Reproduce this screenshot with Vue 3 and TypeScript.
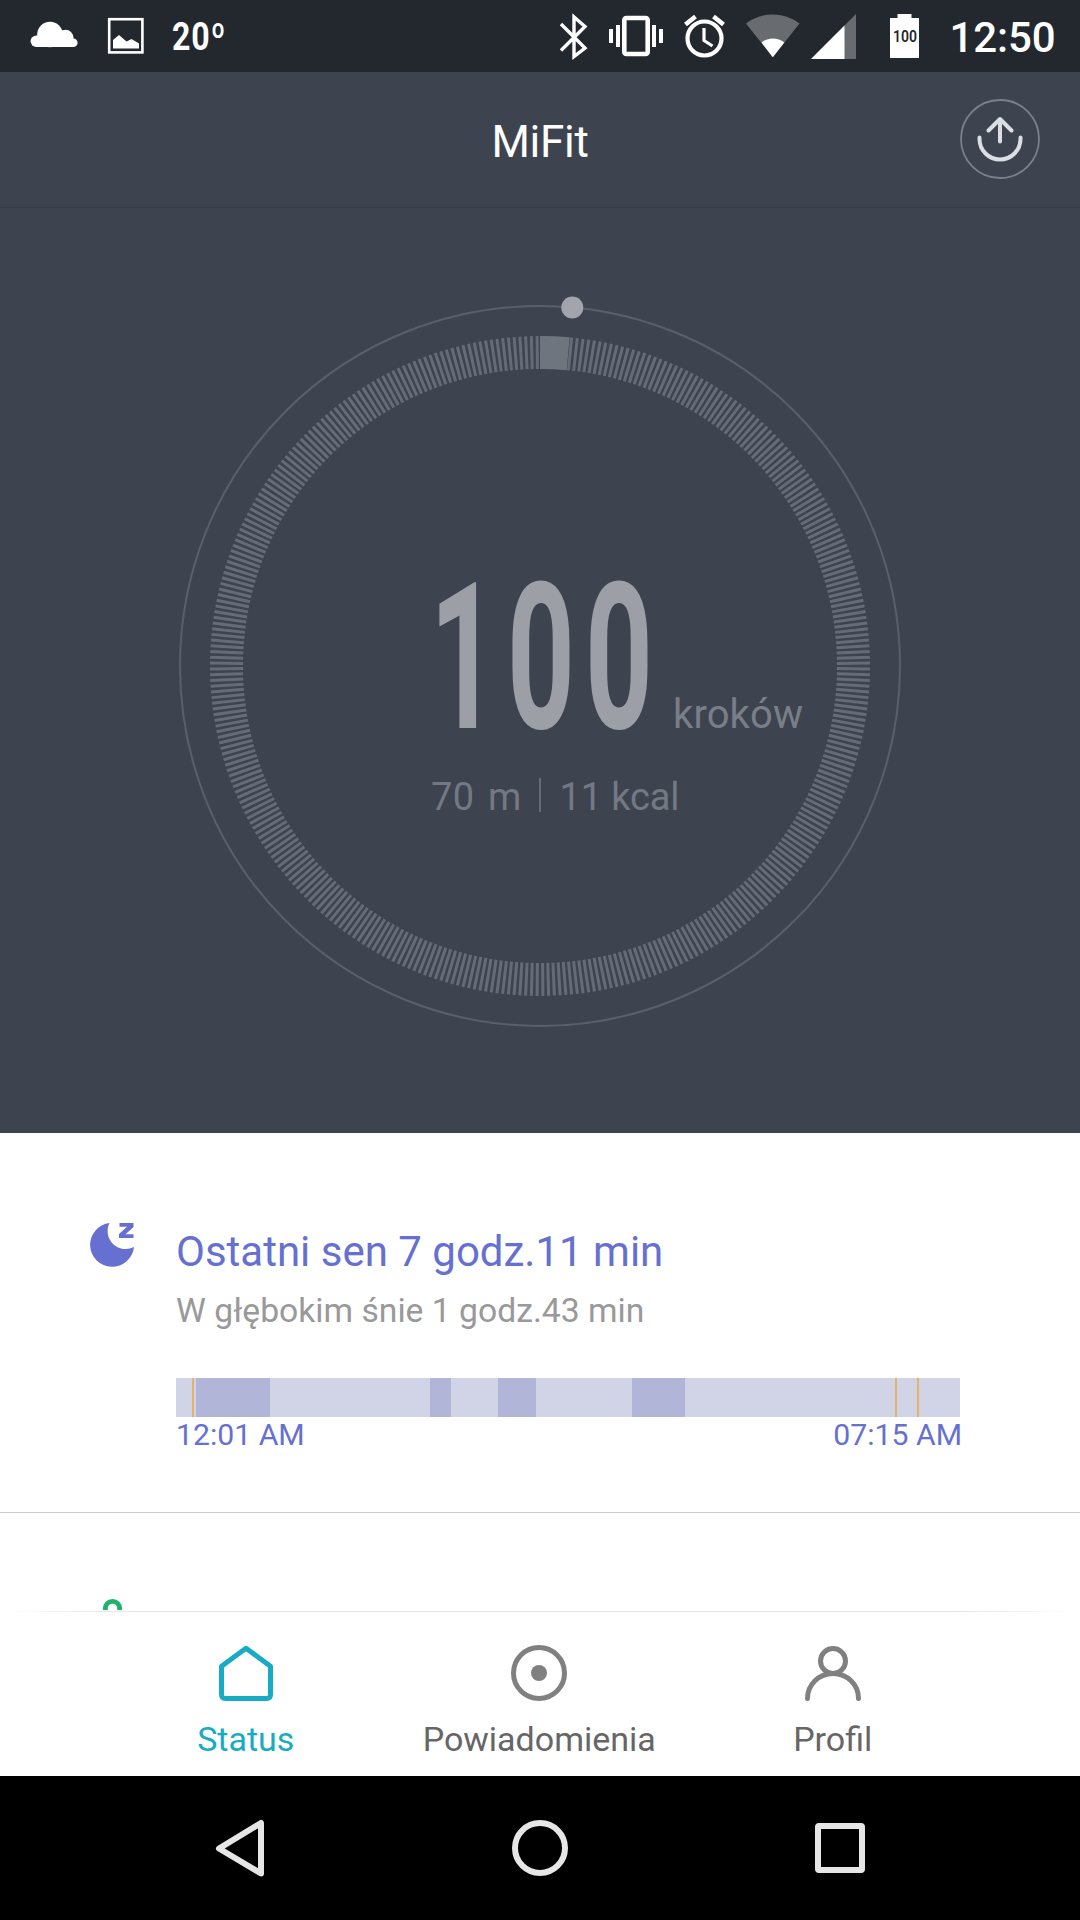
<script setup lang="ts">
interface Segment {
  kind: 'light' | 'deep' | 'awake'
  width: number
}

interface Tab {
  id: 'status' | 'alerts' | 'profile'
  label: string
  active: boolean
}

const steps = '100'
const progressDeg = 5.15

// One mark per degree, leaving out the part covered by the progress block
const marks: number[] = Array.from({ length: 360 }, (_, i) => i + 0.5).filter((a) => a > progressDeg)

const rad = (deg: number): number => (deg * Math.PI) / 180
const onRing = (deg: number, r: number): string =>
  `${(540 + r * Math.sin(rad(deg))).toFixed(2)} ${(458 - r * Math.cos(rad(deg))).toFixed(2)}`

const marksPath = marks.map((a) => `M${onRing(a, 297)}L${onRing(a, 330)}`).join('')
const progressPath =
  `M${onRing(0, 297)}L${onRing(0, 330)}A330 330 0 0 1 ${onRing(progressDeg, 330)}` +
  `L${onRing(progressDeg, 297)}A297 297 0 0 0 ${onRing(0, 297)}Z`
const knob = {
  x: 540 + 360 * Math.sin(rad(progressDeg)),
  y: 458 - 360 * Math.cos(rad(progressDeg)),
}

const segments: Segment[] = [
  { kind: 'light', width: 16 },
  { kind: 'awake', width: 2 },
  { kind: 'light', width: 2 },
  { kind: 'deep', width: 74 },
  { kind: 'light', width: 160 },
  { kind: 'deep', width: 21 },
  { kind: 'light', width: 47 },
  { kind: 'deep', width: 38 },
  { kind: 'light', width: 96 },
  { kind: 'deep', width: 53 },
  { kind: 'light', width: 210 },
  { kind: 'awake', width: 2 },
  { kind: 'light', width: 20 },
  { kind: 'awake', width: 2 },
  { kind: 'light', width: 41 },
]

const tabs: Tab[] = [
  { id: 'status', label: 'Status', active: true },
  { id: 'alerts', label: 'Powiadomienia', active: false },
  { id: 'profile', label: 'Profil', active: false },
]
</script>

<template>
  <div class="screen">
    <div class="statusbar">
      <svg class="notifications" width="240" height="72" viewBox="0 0 240 72">
        <g fill="#fff">
          <circle cx="36.300" cy="41.300" r="5.700" />
          <circle cx="42" cy="38" r="4.800" />
          <circle cx="50" cy="34.500" r="12.800" />
          <circle cx="65.500" cy="37.500" r="7.800" />
          <circle cx="73.300" cy="42.800" r="4.300" />
          <rect x="36.300" y="37" width="37" height="10" />
        </g>
        <rect x="109.200" y="19.200" width="33.200" height="33.200" fill="none" stroke="#fff" stroke-width="2.600" />
        <path d="M113 48.500V40l6-5 7.500 6.500 5-2.500 7.500 4.500v5Z" fill="#fff" />
        <g transform="translate(0 50) scale(.845 1)">
          <text x="203.500 226.300 249.500" class="temp">20º</text>
        </g>
      </svg>
      <svg class="system" width="540" height="72" viewBox="540 0 540 72">
        <path d="M561 24 585 48 574 56.500V17L585 26.500 561 50.500" fill="none" stroke="#fff" stroke-width="3.400" />
        <rect x="624.300" y="18" width="23.400" height="36" rx="2" fill="none" stroke="#fff" stroke-width="4.600" />
        <path d="M611 29v14M618 25v22M654 25v22M661 29v14" fill="none" stroke="#fff" stroke-width="4" />
        <circle cx="704.500" cy="38.500" r="17" fill="none" stroke="#fff" stroke-width="4.200" />
        <path d="M685.500 24.500 695.500 16.500M713.500 16.500 723.500 24.500" stroke="#fff" stroke-width="4.600" />
        <path d="M704 28v12.500L712.500 46" fill="none" stroke="#fff" stroke-width="3.200" />
        <path d="M772.800 57.300 746 23.500A44 44 0 0 1 799.500 23.500Z" fill="#686c71" />
        <path d="M772.800 57.300 761.500 42.500A18.500 18.500 0 0 1 784.300 42.500Z" fill="#fff" />
        <path d="M811 59 856 14V59Z" fill="#686c71" />
        <path d="M811 59 844.500 25.500V59Z" fill="#fff" />
        <path d="M890 18h7.500v-4h14v4h7.500v40H890Z" fill="#fff" />
        <text x="893" y="42" textLength="24" lengthAdjust="spacingAndGlyphs" class="charge">100</text>
        <text x="949.500" y="52" textLength="106" class="clock">12:50</text>
      </svg>
    </div>

    <header class="header">
      <h1 class="title">MiFit</h1>
      <svg class="share" width="82" height="82" viewBox="-41 -41 82 82" fill="none" stroke-linecap="round" stroke-linejoin="round">
        <circle r="39" stroke="#7b808a" stroke-width="1.800" />
        <path d="M0 2.500V-19.500M-11.500-8.500 0-20 11.500-8.500M-20.500-1.500V0a20.500 20.500 0 0 0 41 0v-1.500" stroke="#dbdee2" stroke-width="4" />
      </svg>
    </header>

    <section class="hero">
      <svg width="1080" height="925" viewBox="0 0 1080 925">
        <circle cx="540" cy="458" r="360" fill="none" stroke="#59606c" stroke-width="2" />
        <path :d="marksPath" stroke="#656c77" stroke-width="3" fill="none" />
        <path :d="progressPath" fill="#6e757e" />
        <circle :cx="knob.x" :cy="knob.y" r="11" fill="#a2a5ab" />
        <g transform="translate(0 520) scale(.58 1)">
          <text class="steps" x="741 874 1008.500">{{ steps }}</text>
        </g>
        <text class="unit" x="673" y="520" textLength="130">kroków</text>
        <text class="stat" x="431" y="602" textLength="43">70</text>
        <text class="stat" x="488" y="602">m</text>
        <path d="M540 570v34" stroke="#666c77" stroke-width="2" />
        <text class="stat" x="559.500" y="602" textLength="120">11 kcal</text>
      </svg>
    </section>

    <section class="sleep">
      <svg class="moon" width="48" height="48" viewBox="88 1221 48 48" fill="#6670d0">
        <path d="M109.500 1223A22 22 0 1 0 134 1247 18 18 0 0 1 109.500 1223Z" />
        <path d="M119.500 1223H133.500V1227L125.500 1234.300H133.500V1238H119V1234L127 1226.800H119.500Z" />
      </svg>
      <div class="details">
        <h2 class="total">Ostatni sen 7 godz.11 min</h2>
        <p class="deep-sleep">W głębokim śnie 1 godz.43 min</p>
        <div class="timeline">
          <span v-for="(s, i) in segments" :key="i" :class="['seg', s.kind]" :style="{ width: s.width + 'px' }"></span>
        </div>
        <div class="times">
          <span>12:01 AM</span>
          <span>07:15 AM</span>
        </div>
      </div>
    </section>

    <section class="next">
      <svg width="24" height="12" viewBox="0 0 24 12">
        <circle cx="12.500" cy="10.500" r="7.200" fill="none" stroke="#1fb26c" stroke-width="4.800" />
      </svg>
    </section>

    <nav class="tabs">
      <div v-for="t in tabs" :key="t.id" :class="['tab', { active: t.active }]">
        <svg width="60" height="60" viewBox="-30 -30 60 60" fill="none" stroke="currentColor" stroke-width="5" stroke-linecap="round" stroke-linejoin="round">
          <path v-if="t.id === 'status'" d="M0-24.800 24.500-6.800V21.500Q24.500 25.500 20.500 25.500H-20.500Q-24.500 25.500-24.500 21.500V-6.800Z" />
          <template v-else-if="t.id === 'alerts'">
            <circle r="25.500" />
            <circle r="8" fill="currentColor" stroke="none" />
          </template>
          <template v-else>
            <circle cy="-12" r="12.500" />
            <path d="M-25.500 25.500a25.500 25 0 0 1 51 0" />
          </template>
        </svg>
        <span class="label">{{ t.label }}</span>
      </div>
    </nav>

    <div class="softkeys">
      <svg width="1080" height="144" viewBox="0 0 1080 144" fill="none" stroke="#e6e6e6" stroke-width="6" stroke-linejoin="round">
        <path d="M219 72.500 261 47V97.500Z" />
        <circle cx="540" cy="72" r="25" />
        <rect x="818" y="50" width="44" height="44" rx="1" />
      </svg>
    </div>
  </div>
</template>

<style>
body {
  margin: 0;
}
</style>

<style scoped>
.screen {
  width: 1080px;
  height: 1920px;
  display: flex;
  flex-direction: column;
  overflow: hidden;
  background: #fff;
  font-family: Roboto, 'Liberation Sans', sans-serif;
}

svg {
  display: block;
}

.statusbar {
  height: 72px;
  display: flex;
  justify-content: space-between;
  background: #23282f;
}

.temp {
  font-size: 38px;
  font-weight: 700;
  fill: #fff;
}

.charge {
  font-size: 17px;
  font-weight: 600;
  fill: #23282f;
}

.clock {
  font-size: 42px;
  font-weight: 500;
  fill: #fff;
}

.header {
  box-sizing: border-box;
  height: 136px;
  display: grid;
  grid-template-columns: 1fr auto 1fr;
  align-items: center;
  padding: 0 39px 1px;
  background: #3d444f;
  border-bottom: 1px solid #363c46;
}

.title {
  grid-column: 2;
  margin: 0;
  padding-top: 5px;
  font-size: 44px;
  font-weight: 400;
  line-height: 50px;
  letter-spacing: -0.3px;
  color: #fff;
}

.share {
  grid-column: 3;
  justify-self: end;
}

.hero {
  height: 925px;
  background: #3d444f;
}

.steps {
  font-size: 204px;
  font-weight: 700;
  fill: #9c9fa5;
}

.unit {
  font-size: 40px;
  fill: #797e88;
}

.stat {
  font-size: 38px;
  fill: #737983;
}

.sleep {
  box-sizing: border-box;
  height: 380px;
  display: flex;
  gap: 40px;
  padding: 88px 120px 0 88px;
  border-bottom: 1px solid #cbcbcd;
}

.details {
  flex: 1;
  min-width: 0;
}

.total {
  margin: 0;
  padding-top: 6px;
  font-size: 42px;
  font-weight: 400;
  line-height: 50px;
  color: #6670d0;
  white-space: nowrap;
}

.deep-sleep {
  margin: 14px 0 0;
  font-size: 33.7px;
  line-height: 40px;
  color: #999;
  white-space: nowrap;
}

.timeline {
  display: flex;
  width: 784px;
  height: 39px;
  margin-top: 47px;
}

.light {
  background: #d1d3e7;
}

.deep {
  background: #b1b5d8;
}

.awake {
  background: #e5b269;
}

.times {
  display: flex;
  justify-content: space-between;
  width: 786px;
  font-size: 30.2px;
  line-height: 36px;
  color: #6670d0;
}

.next {
  box-sizing: border-box;
  height: 98px;
  display: flex;
  align-items: flex-end;
  padding: 0 0 1px 100px;
}

.tabs {
  box-sizing: border-box;
  height: 165px;
  display: grid;
  grid-template-columns: repeat(3, 293.500px);
  padding: 32px 0 0 99px;
  background: linear-gradient(90deg, #fff, #e4e4e4 12%, #e4e4e4 88%, #fff) top / 100% 1px no-repeat;
}

.tab {
  display: flex;
  flex-direction: column;
  align-items: center;
  color: #808080;
}

.label {
  margin-top: 15px;
  font-size: 34px;
  line-height: 42px;
  color: #666;
}

.active,
.active .label {
  color: #18acc4;
}

.softkeys {
  height: 144px;
  background: #000;
}
</style>
